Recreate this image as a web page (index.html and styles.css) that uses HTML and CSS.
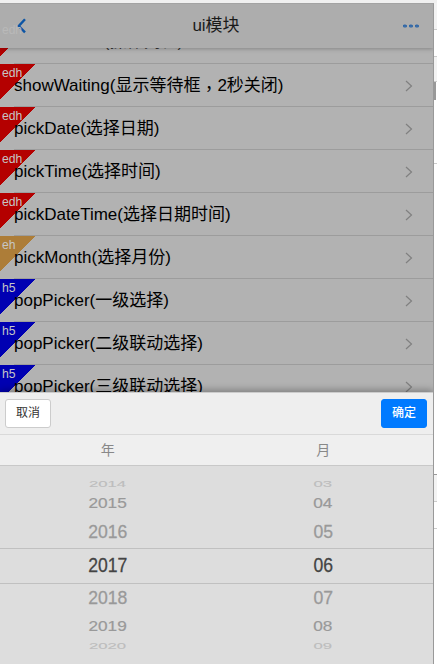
FILE: index.html
```
<!DOCTYPE html>
<html lang="zh">
<head>
<meta charset="utf-8">
<title>ui模块</title>
<link rel="stylesheet" href="styles.css">
</head>
<body>
<div class="window">
  <div class="phone">
    <header class="bar">
      <svg class="back" viewBox="0 0 10 16"><path d="M8 1.2L1.8 8L8 14.4" fill="none" stroke="#0c55a5" stroke-width="2.4"/></svg>
      <span class="ghost">edh</span>
      <h1>ui模块</h1>
      <svg class="more" viewBox="0 0 18 6"><g fill="#8d9fb5" stroke="#1f5da5" stroke-width="1.2"><ellipse cx="3" cy="3" rx="1.4" ry="1"/><ellipse cx="9" cy="3" rx="1.4" ry="1"/><ellipse cx="15" cy="3" rx="1.4" ry="1"/></g></svg>
    </header>
    <ul class="list">
      <li class="first"><i class="tag red"></i><span>actionSheet(操作列表)</span></li>
      <li><i class="tag red">edh</i><span>showWaiting(显示等待框<em lang="zh-TW">，</em>2秒关闭)</span><svg class="chev" viewBox="0 0 8 12"><path d="M1 1L6.5 6L1 11"/></svg></li>
      <li><i class="tag red">edh</i><span>pickDate(选择日期)</span><svg class="chev" viewBox="0 0 8 12"><path d="M1 1L6.5 6L1 11"/></svg></li>
      <li><i class="tag red">edh</i><span>pickTime(选择时间)</span><svg class="chev" viewBox="0 0 8 12"><path d="M1 1L6.5 6L1 11"/></svg></li>
      <li><i class="tag red">edh</i><span>pickDateTime(选择日期时间)</span><svg class="chev" viewBox="0 0 8 12"><path d="M1 1L6.5 6L1 11"/></svg></li>
      <li><i class="tag tan">eh</i><span>pickMonth(选择月份)</span><svg class="chev" viewBox="0 0 8 12"><path d="M1 1L6.5 6L1 11"/></svg></li>
      <li><i class="tag blue">h5</i><span>popPicker(一级选择)</span><svg class="chev" viewBox="0 0 8 12"><path d="M1 1L6.5 6L1 11"/></svg></li>
      <li><i class="tag blue">h5</i><span>popPicker(二级联动选择)</span><svg class="chev" viewBox="0 0 8 12"><path d="M1 1L6.5 6L1 11"/></svg></li>
      <li><i class="tag blue">h5</i><span>popPicker(三级联动选择)</span><svg class="chev" viewBox="0 0 8 12"><path d="M1 1L6.5 6L1 11"/></svg></li>
    </ul>
    <section class="picker">
      <div class="actions"><button>取消</button><button class="ok">确定</button></div>
      <div class="labels"><span>年</span><span>月</span></div>
      <div class="wheel">
        <div class="item far"><b>2014</b><b>03</b></div>
        <div class="item mid"><b>2015</b><b>04</b></div>
        <div class="item near"><b>2016</b><b>05</b></div>
        <div class="item current"><b>2017</b><b>06</b></div>
        <div class="item near"><b>2018</b><b>07</b></div>
        <div class="item mid"><b>2019</b><b>08</b></div>
        <div class="item far"><b>2020</b><b>09</b></div>
      </div>
    </section>
  </div>
  <aside class="edge">
    <div class="e1"></div><div class="e2"></div><div class="e3"></div><div class="thumb"></div><div class="e4"></div><div class="e5"></div><div class="e6"></div><div class="e7"></div>
  </aside>
</div>
</body>
</html>
```
FILE: styles.css
```
* { box-sizing: border-box; }
body { margin: 0; background: #f0f0f0; font-family: "Liberation Sans", "Noto Sans CJK SC", sans-serif; overflow: hidden; }
.window { display: flex; height: 664px; padding-top: 3px; }
.phone { width: 434px; height: 661px; border-top: 1px solid #a3a3a3; border-right: 1px solid #999; background: #b2b2b2; display: flex; flex-direction: column; overflow: hidden; }
.bar { position: relative; z-index: 2; flex: none; height: 44px; background: #adadad; box-shadow: 0 1px 4px rgba(0,0,0,.25); display: flex; align-items: center; justify-content: space-between; padding: 0 13px 0 17px; }
.bar h1 { margin: 0 0 0 3px; font-size: 17px; font-weight: 400; color: #1a1a1a; line-height: 44px; }
.back { width: 10px; height: 16px; }
.more { width: 18px; height: 6px; }
.ghost { position: absolute; left: 2px; top: 18px; font-size: 12px; line-height: 16px; color: #b9b9b9; }
.list { list-style: none; margin: 0; padding: 0; flex: none; height: 344px; overflow: hidden; }
.list li { position: relative; height: 43px; display: flex; align-items: center; justify-content: space-between; padding: 0 20px 0 14px; font-size: 17px; line-height: 22px; color: #000; white-space: nowrap; }
.list li::after { content: ""; position: absolute; left: 14px; right: 0; bottom: 0; height: 1px; background: #9c9c9c; }
.list li.first { margin-top: -27px; color: #333; }
.list li.first span { top: -1px; }
.list li span { position: relative; }
.list em { font-family: "Noto Sans CJK TC", sans-serif; font-style: normal; line-height: 1; position: relative; top: 4px; }
.tag { position: absolute; left: 0; top: 0; width: 35px; height: 35px; padding: 1px 0 0 2px; font-size: 12.2px; font-style: normal; line-height: 16px; color: #c6c6c6; }
.red { background: linear-gradient(135deg, #b40000 50%, transparent 50.5%); }
.tan { background: linear-gradient(135deg, #ad7d38 50%, transparent 50.5%); }
.blue { background: linear-gradient(135deg, #0000b2 50%, transparent 50.5%); }
.chev { width: 8px; height: 12px; margin-top: 1px; fill: none; stroke: #808080; stroke-width: 1.2; }
.picker { position: relative; flex: none; height: 272px; background: #ddd; border-top: 1px solid #ccc; box-shadow: 0 -2px 7px rgba(0,0,0,.3); }
.actions { height: 42px; padding: 6px 6px 0 5px; background: #eee; border-bottom: 1px solid #d9d9d9; display: flex; justify-content: space-between; }
button { width: 46px; height: 29px; padding: 0 0 1px; border: 1px solid #ccc; border-radius: 3px; background: #fff; color: #333; font: 12px/26px "Liberation Sans", "Noto Sans CJK SC", sans-serif; }
.ok { background: #007aff; border-color: #007aff; color: #fff; font-weight: 500; }
.labels { height: 31px; display: grid; grid-template-columns: 1fr 1fr; padding-right: 2px; background: #efefef; border-bottom: 1px solid #c8c8c8; text-align: center; font-size: 14px; line-height: 31px; color: #888; }
.wheel { padding: 12px 2px 0 0; }
.wheel { padding-right: 0; }
.item { display: grid; grid-template-columns: 1fr 1fr; grid-template-rows: 100%; align-items: center; justify-items: center; padding-right: 2px; font-size: 17.6px; line-height: 20px; color: #999; }
.item b { font-weight: 400; -webkit-text-stroke: .25px; position: relative; top: -1px; }
.far { height: 13px; color: #bdbdbd; }
.far b { transform: scale(.95, .48); }
.mid { height: 26px; }
.mid b { transform: scale(.98, .8); }
.near { height: 31px; }
.near b { transform: scaleY(1.02); }
.current { height: 36px; border-top: 1px solid #c0c0c0; border-bottom: 1px solid #c0c0c0; margin-bottom: -1px; color: #444; }
.current b { transform: scaleY(1.1); }
.edge { width: 3px; height: 661px; background: #fff; }
.edge div { border-bottom: 1px solid #ccc; }
.e1 { height: 27px; background: #f3f3f3; }
.e2 { height: 27px; }
.e3 { height: 25px; background: #f3f3f3; }
.edge .thumb { height: 18px; width: 2px; background: #999; border: 0; }
.e4 { height: 64px; }
.edge .e5 { height: 311px; border-color: #999; }
.e6 { height: 27px; background: #f3f3f3; }
.e7 { height: 27px; }
```
